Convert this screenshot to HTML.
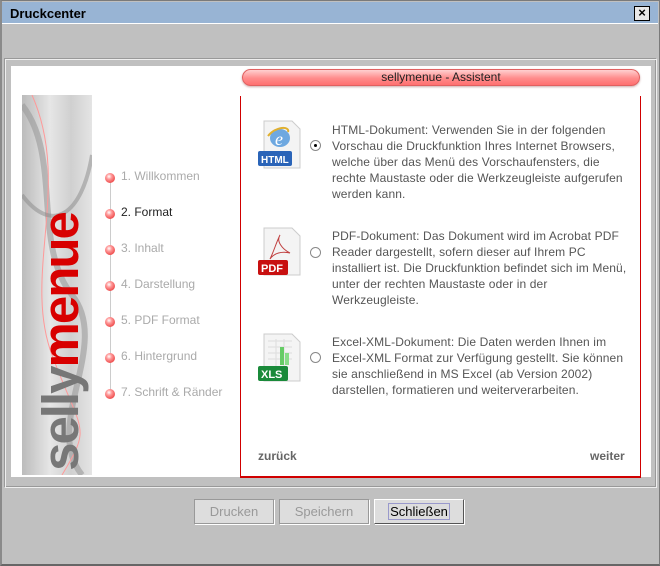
<!DOCTYPE html>
<html><head><meta charset="utf-8"><style>
*{margin:0;padding:0;box-sizing:border-box}
body{width:660px;height:566px;background:#c0c0c0;font-family:"Liberation Sans",Arial,sans-serif;position:relative;overflow:hidden}
.a{position:absolute}
.win{left:0;top:0;width:660px;height:566px;border:1px solid #7a7a7a;border-left:2px solid #8a8a8a;border-bottom:2px solid #666}
.title{left:2px;top:2px;width:656px;height:22px;background:#98b4d4;border-bottom:1px solid #fff;font-size:13px;font-weight:bold;color:#000;padding:4px 0 0 8px}
.close{left:634px;top:6px;width:16px;height:15px;border:1px solid #000;background:#e8e8e8;font-size:13px;line-height:12px;text-align:center;font-weight:bold}
.panel{left:4px;top:58px;width:653px;height:430px;border:1px solid #999;border-right-color:#eee;border-bottom-color:#eee;box-shadow:inset 1px 1px 0 #eee,inset -1px -1px 0 #999}
.white{left:11px;top:66px;width:640px;height:411px;background:#fff}
.pill{left:242px;top:69px;width:398px;height:17px;border-radius:9px;background:linear-gradient(#ffd0d0,#ff8c8c 55%,#ff7070);border:1px solid #e06060;font-size:12px;text-align:center;color:#222;line-height:15px;box-shadow:0 1px 2px #caa}
.box{left:240px;top:96px;width:401px;height:382px;border-left:1px solid #d00000;border-right:1px solid #d00000;border-bottom:2px solid #d00000}
.img{left:22px;top:95px;width:70px;height:380px;background:linear-gradient(90deg,#bbb,#e6e6e6 40%,#d0d0d0 70%,#e4e4e4);overflow:hidden}
.logo{left:-111px;top:222px;width:300px;height:50px;transform:rotate(-90deg);font-size:51px;font-weight:bold;letter-spacing:-2px;text-align:center;line-height:50px;white-space:nowrap}
.step{font-size:12px;color:#aaa}
.dot{width:10px;height:10px;border-radius:50%;background:radial-gradient(circle at 40% 35%,#fff 0,#ff9a9a 30%,#e83030 90%)}
.vline{left:110px;top:176px;width:1px;height:216px;background:#ccc}
.txt{left:332px;width:298px;font-size:12px;line-height:16px;color:#555;letter-spacing:.12px}
.radio{width:11px;height:11px;border-radius:50%;border:1px solid #888;background:#fff}
.icon{width:44px;height:50px}
.btn{top:499px;height:25px;border:1px solid #999;background:#ddd;font-size:13px;color:#999;text-align:center;line-height:23px;box-shadow:1px 1px 0 #fff}
.nav{font-size:12px;font-weight:bold;color:#666}
</style></head><body>
<div class="a win"></div>
<div class="a title">Druckcenter</div>
<div class="a close">×</div>
<div class="a panel"></div>
<div class="a white"></div>
<div class="a pill">sellymenue - Assistent</div>
<div class="a box"></div>
<div class="a img">
<svg class="a" style="left:0;top:0" width="70" height="380"><path d="M0 10 C40 60 10 150 50 200 S20 330 60 380" stroke="#999" stroke-width="6" fill="none" opacity=".6"/><path d="M10 0 C50 90 0 180 30 260 S70 330 40 380" stroke="#f99" stroke-width="1" fill="none"/><path d="M0 100 C30 140 60 120 70 60" stroke="#888" stroke-width="4" fill="none" opacity=".5"/></svg>
<div class="a logo"><span style="color:#777">selly</span><span style="color:#d80000">menue</span></div>
</div>
<div class="a vline"></div>
<div class="a dot" style="left:105px;top:173px"></div><div class="a step" style="left:121px;top:169px">1. Willkommen</div>
<div class="a dot" style="left:105px;top:209px"></div><div class="a step" style="left:121px;top:205px;color:#222">2. Format</div>
<div class="a dot" style="left:105px;top:245px"></div><div class="a step" style="left:121px;top:241px">3. Inhalt</div>
<div class="a dot" style="left:105px;top:281px"></div><div class="a step" style="left:121px;top:277px">4. Darstellung</div>
<div class="a dot" style="left:105px;top:317px"></div><div class="a step" style="left:121px;top:313px">5. PDF Format</div>
<div class="a dot" style="left:105px;top:353px"></div><div class="a step" style="left:121px;top:349px">6. Hintergrund</div>
<div class="a dot" style="left:105px;top:389px"></div><div class="a step" style="left:121px;top:385px">7. Schrift &amp; Ränder</div>

<svg class="a icon" style="left:258px;top:120px" viewBox="0 0 44 50"><path d="M6 1h28l8 8v39H6z" fill="#f4f4f4" stroke="#ccc"/><ellipse cx="22" cy="18" rx="10" ry="9" fill="#6ea8e0"/><text x="17" y="25" font-size="18" fill="#fff" font-family="Liberation Serif" font-style="italic">e</text><path d="M10 16c8-10 22-10 20 -4" stroke="#e0b030" stroke-width="2" fill="none"/><rect x="0" y="31" width="34" height="15" rx="2" fill="#2a64b8"/><text x="3" y="43" font-size="10" font-weight="bold" fill="#fff" font-family="Liberation Sans">HTML</text></svg>
<svg class="a icon" style="left:258px;top:227px" viewBox="0 0 44 50"><path d="M6 1h28l8 8v39H6z" fill="#f4f4f4" stroke="#ccc"/><path d="M22 8c-4 6 2 14 10 18c-8-2-16 0-20 6c4-8 6-16 10-24z" stroke="#c04040" fill="none"/><rect x="0" y="33" width="30" height="15" rx="2" fill="#c81010"/><text x="3" y="45" font-size="11" font-weight="bold" fill="#fff" font-family="Liberation Sans">PDF</text></svg>
<svg class="a icon" style="left:258px;top:333px" viewBox="0 0 44 50"><path d="M6 1h28l8 8v39H6z" fill="#f4f4f4" stroke="#ccc"/><path d="M10 8h24M10 14h24M10 20h24M10 26h24M18 6v30M26 6v30" stroke="#ddd"/><rect x="22" y="14" width="4" height="18" fill="#6c6"/><rect x="27" y="20" width="4" height="12" fill="#8d8"/><rect x="0" y="33" width="30" height="15" rx="2" fill="#1a8a3a"/><text x="3" y="45" font-size="11" font-weight="bold" fill="#fff" font-family="Liberation Sans">XLS</text></svg>

<div class="a radio" style="left:310px;top:140px"><div class="a" style="left:3px;top:3px;width:3px;height:3px;background:#000;border-radius:50%"></div></div>
<div class="a radio" style="left:310px;top:247px"></div>
<div class="a radio" style="left:310px;top:352px"></div>

<div class="a txt" style="top:122px">HTML-Dokument: Verwenden Sie in der folgenden<br>Vorschau die Druckfunktion Ihres Internet Browsers,<br>welche über das Menü des Vorschaufensters, die<br>rechte Maustaste oder die Werkzeugleiste aufgerufen<br>werden kann.</div>
<div class="a txt" style="top:228px">PDF-Dokument: Das Dokument wird im Acrobat PDF<br>Reader dargestellt, sofern dieser auf Ihrem PC<br>installiert ist. Die Druckfunktion befindet sich im Menü,<br>unter der rechten Maustaste oder in der<br>Werkzeugleiste.</div>
<div class="a txt" style="top:334px">Excel-XML-Dokument: Die Daten werden Ihnen im<br>Excel-XML Format zur Verfügung gestellt. Sie können<br>sie anschließend in MS Excel (ab Version 2002)<br>darstellen, formatieren und weiterverarbeiten.</div>

<div class="a nav" style="left:258px;top:449px">zurück</div>
<div class="a nav" style="left:590px;top:449px">weiter</div>

<div class="a btn" style="left:194px;width:80px">Drucken</div>
<div class="a btn" style="left:279px;width:90px">Speichern</div>
<div class="a btn" style="left:374px;width:90px;color:#000;border-color:#555;border-top-color:#fff;border-left-color:#fff;background:#ddd"><span style="border:1px solid #99c;padding:0 1px">Schließen</span></div>
</body></html>
